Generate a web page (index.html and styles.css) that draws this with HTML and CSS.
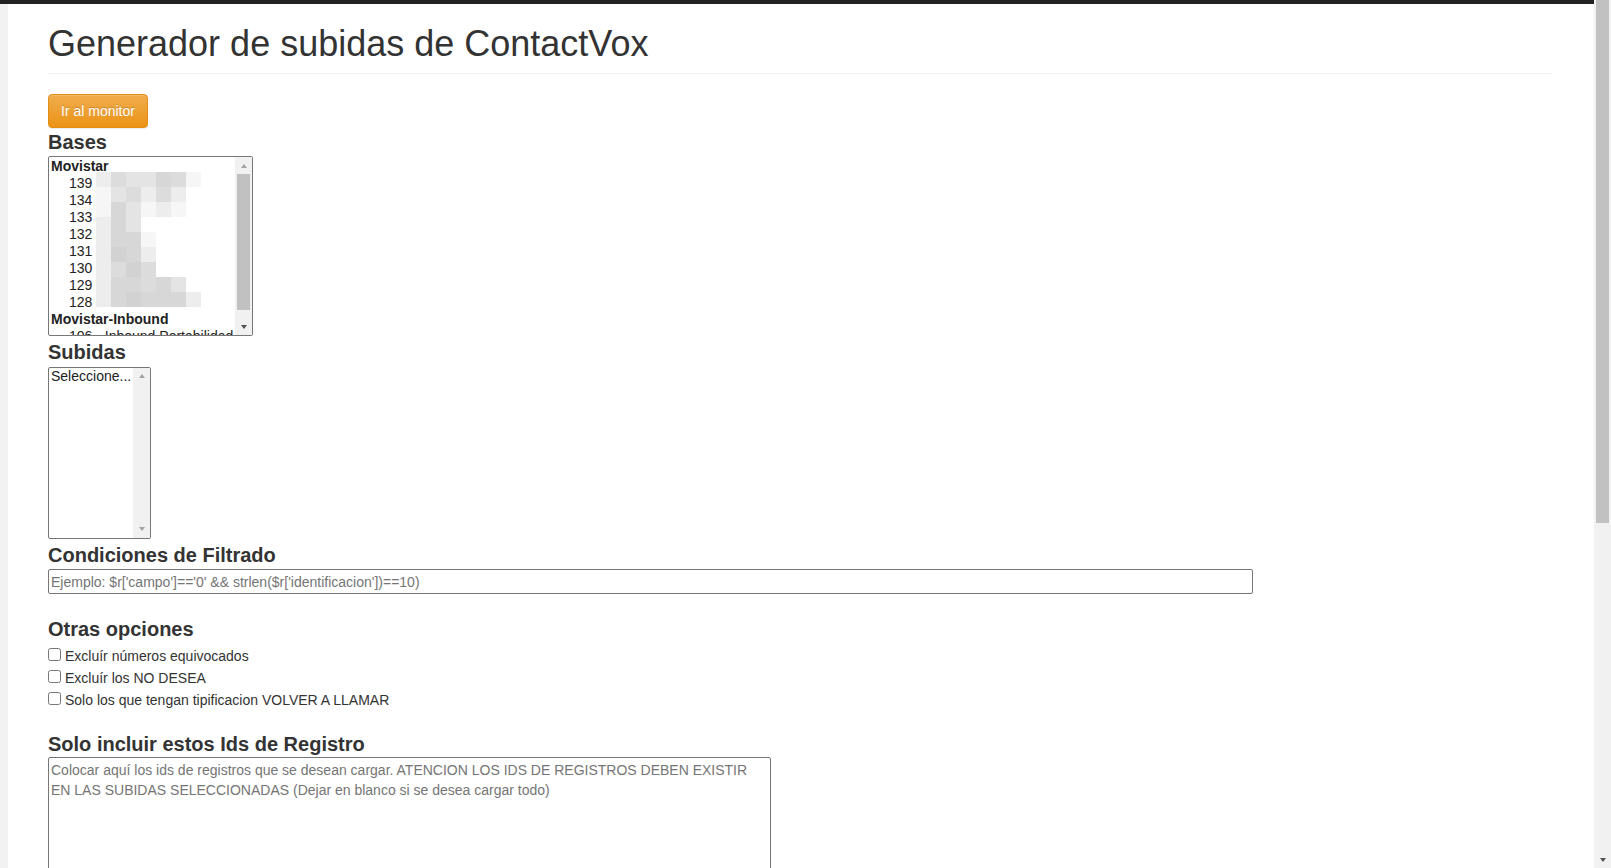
FILE: index.html
```html
<!DOCTYPE html>
<html lang="es">
<head>
  <meta charset="UTF-8" />
  <meta name="viewport" content="width=device-width, initial-scale=1.0"/>
  <title>Generador de subidas | ContactVox</title>
  <link rel="stylesheet" href="styles.css">
</head>
<body>
  <div class="screen">
    <div class="page">
      <div class="topbar"></div>
      <div class="frame">
        <div class="gutter"></div>
        <main class="content">
          <h1 class="page-title">Generador de subidas de ContactVox</h1>
          <button type="button" class="btn-warning">Ir al monitor</button>

          <label class="field-label">Bases</label>
          <div class="listbox listbox-bases">
            <div class="listbox-items">
              <div class="opt-group">Movistar</div>
              <div class="opt">139</div>
              <div class="opt">134</div>
              <div class="opt">133</div>
              <div class="opt">132</div>
              <div class="opt">131</div>
              <div class="opt">130</div>
              <div class="opt">129</div>
              <div class="opt">128</div>
              <div class="opt-group">Movistar-Inbound</div>
              <div class="opt">106 - Inbound Portabilidad</div>
              <!-- nombres pixelados -->
              <div class="mosaic">
                <span class="t2"></span><span class="t4"></span><span class="t3"></span><span class="t3"></span><span class="t5"></span><span class="t4"></span><span class="t1"></span>
                <span class="t1"></span><span class="t3"></span><span class="t4"></span><span class="t2"></span><span class="t4"></span><span class="t2"></span><span class="t0"></span>
                <span class="t1"></span><span class="t5"></span><span class="t3"></span><span class="t1"></span><span class="t2"></span><span class="t1"></span><span class="t0"></span>
                <span class="t2"></span><span class="t5"></span><span class="t3"></span><span class="t0"></span><span class="t0"></span><span class="t0"></span><span class="t0"></span>
                <span class="t2"></span><span class="t5"></span><span class="t5"></span><span class="t1"></span><span class="t0"></span><span class="t0"></span><span class="t0"></span>
                <span class="t2"></span><span class="t6"></span><span class="t5"></span><span class="t2"></span><span class="t0"></span><span class="t0"></span><span class="t0"></span>
                <span class="t2"></span><span class="t4"></span><span class="t6"></span><span class="t4"></span><span class="t0"></span><span class="t0"></span><span class="t0"></span>
                <span class="t2"></span><span class="t5"></span><span class="t5"></span><span class="t4"></span><span class="t5"></span><span class="t3"></span><span class="t0"></span>
                <span class="t2"></span><span class="t5"></span><span class="t6"></span><span class="t5"></span><span class="t5"></span><span class="t5"></span><span class="t2"></span>
              </div>
            </div>
            <div class="sb">
              <span class="sb-btn sb-up off"></span>
              <span class="sb-thumb bases-thumb"></span>
              <span class="sb-track"></span>
              <span class="sb-btn sb-down"></span>
            </div>
          </div>

          <label class="field-label">Subidas</label>
          <div class="listbox listbox-subidas">
            <div class="listbox-items">
              <div class="opt-plain">Seleccione...</div>
            </div>
            <div class="sb">
              <span class="sb-btn sb-up off"></span>
              <span class="sb-track"></span>
              <span class="sb-btn sb-down off"></span>
            </div>
          </div>

          <label class="field-label">Condiciones de Filtrado</label>
          <input type="text" class="filter-input" placeholder="Ejemplo: $r['campo']=='0' &amp;&amp; strlen($r['identificacion'])==10)">

          <label class="field-label spaced">Otras opciones</label>
          <div class="checks">
            <label class="check"><input type="checkbox"><span class="check-text">Excluír números equivocados</span></label>
            <label class="check"><input type="checkbox"><span class="check-text">Excluír los NO DESEA</span></label>
            <label class="check"><input type="checkbox"><span class="check-text">Solo los que tengan tipificacion VOLVER A LLAMAR</span></label>
          </div>

          <label class="field-label spaced">Solo incluir estos Ids de Registro</label>
          <textarea class="ids-input" placeholder="Colocar aquí los ids de registros que se desean cargar. ATENCION LOS IDS DE REGISTROS DEBEN EXISTIR EN LAS SUBIDAS SELECCIONADAS (Dejar en blanco si se desea cargar todo)"></textarea>
        </main>
      </div>
    </div>

    <div class="sb page-sb">
      <span class="sb-thumb page-thumb"></span>
      <span class="sb-track"></span>
      <span class="sb-btn sb-down"></span>
    </div>
  </div>
</body>
</html>
```

FILE: styles.css
```css
* {
  box-sizing: border-box;
}

html, body {
  margin: 0;
  height: 100%;
  overflow: hidden;
}

body {
  font-family: "Liberation Sans", Arial, sans-serif;
  font-size: 14px;
  line-height: 1.42857;
  color: #333;
  background: #fff;
}

.screen {
  display: flex;
  height: 100vh;
}

.page {
  flex: 1;
  display: flex;
  flex-direction: column;
  min-width: 0;
}

.topbar {
  height: 4px;
  flex-shrink: 0;
  background: #222;
}

.frame {
  flex: 1;
  display: flex;
  min-height: 0;
}

.gutter {
  width: 8px;
  flex-shrink: 0;
  background: #f2f2f2;
}

.content {
  flex: 1;
  padding: 0 42px 0 40px;
  overflow: hidden;
}

.page-title {
  margin: 20px 0 0;
  padding-bottom: 9px;
  border-bottom: 1px solid #eee;
  font-size: 36px;
  font-weight: 500;
  line-height: 1.1;
}

.btn-warning {
  display: block;
  margin-top: 20px;
  padding: 6px 12px;
  font-family: inherit;
  font-size: 14px;
  line-height: 20px;
  color: #fff;
  border: 1px solid #e38d13;
  border-radius: 4px;
  background-image: linear-gradient(to bottom, #f0ad4e 0, #eb9316 100%);
  text-shadow: 0 -1px 0 rgba(0, 0, 0, 0.2);
  box-shadow: inset 0 1px 0 rgba(255, 255, 255, 0.15), 0 1px 1px rgba(0, 0, 0, 0.075);
  cursor: pointer;
}

.field-label {
  display: block;
  font-size: 20px;
  font-weight: 700;
  line-height: 1.42857;
}

.field-label.spaced {
  margin-top: 21px;
}

/* listas tipo select multiple */
.listbox {
  display: flex;
  margin-bottom: 2px;
  border: 1px solid #767676;
  border-radius: 2px;
  background: #fff;
  overflow: hidden;
}

.listbox-bases {
  width: 205px;
  height: 180px;
}

.listbox-subidas {
  width: 103px;
  height: 172px;
}

.listbox-items {
  flex: 1;
  position: relative;
  overflow: hidden;
  font-size: 14px;
  line-height: 17px;
  color: #222;
}

.listbox-bases .listbox-items {
  padding-top: 1px;
}

.opt-group,
.opt,
.opt-plain {
  height: 17px;
  white-space: nowrap;
}

.opt-group {
  padding-left: 2px;
  font-weight: 700;
}

.opt {
  padding-left: 20px;
}

.opt-plain {
  padding-left: 2px;
}

.mosaic {
  position: absolute;
  left: 47px;
  top: 15px;
  display: grid;
  grid-template-columns: repeat(7, 15px);
  grid-auto-rows: 15px;
}

.t0 { background: #fff; }
.t1 { background: #f6f6f6; }
.t2 { background: #ededed; }
.t3 { background: #e4e4e4; }
.t4 { background: #dcdcdc; }
.t5 { background: #d7d7d7; }
.t6 { background: #d2d2d2; }

/* barras de desplazamiento */
.sb {
  width: 17px;
  flex-shrink: 0;
  display: flex;
  flex-direction: column;
  background: #f1f1f1;
}

.sb-btn {
  height: 17px;
  flex-shrink: 0;
  display: flex;
  align-items: center;
  justify-content: center;
}

.sb-btn::before {
  content: "";
  border-left: 3.5px solid transparent;
  border-right: 3.5px solid transparent;
}

.sb-up::before {
  border-bottom: 4px solid #505050;
}

.sb-down::before {
  border-top: 4px solid #505050;
}

.sb-up.off::before {
  border-bottom-color: #a3a3a3;
}

.sb-down.off::before {
  border-top-color: #a3a3a3;
}

.sb-thumb {
  flex-shrink: 0;
  margin: 0 2px;
  background: #c1c1c1;
}

.sb-track {
  flex: 1;
}

.bases-thumb {
  height: 136px;
}

.page-thumb {
  height: 523px;
}

.filter-input {
  display: block;
  width: 1205px;
  height: 25px;
  padding: 1px 2px;
  border: 1px solid #767676;
  border-radius: 2px;
  font-family: inherit;
  font-size: 14px;
  color: #333;
}

.filter-input::placeholder,
.ids-input::placeholder {
  color: #757575;
}

.checks {
  display: flex;
  flex-direction: column;
  gap: 2px;
  margin-top: 1px;
}

.check {
  display: flex;
  align-items: center;
  height: 20px;
  font-size: 14px;
}

.check input {
  width: 13px;
  height: 13px;
  margin: 0 4px 0 0;
}

.check-text {
  padding-top: 4px;
}

.ids-input {
  display: block;
  width: 723px;
  height: 160px;
  margin-top: -1px;
  padding: 2px;
  border: 1px solid #767676;
  border-radius: 2px;
  font-family: inherit;
  font-size: 14px;
  line-height: 20px;
  color: #333;
  resize: vertical;
}
```
